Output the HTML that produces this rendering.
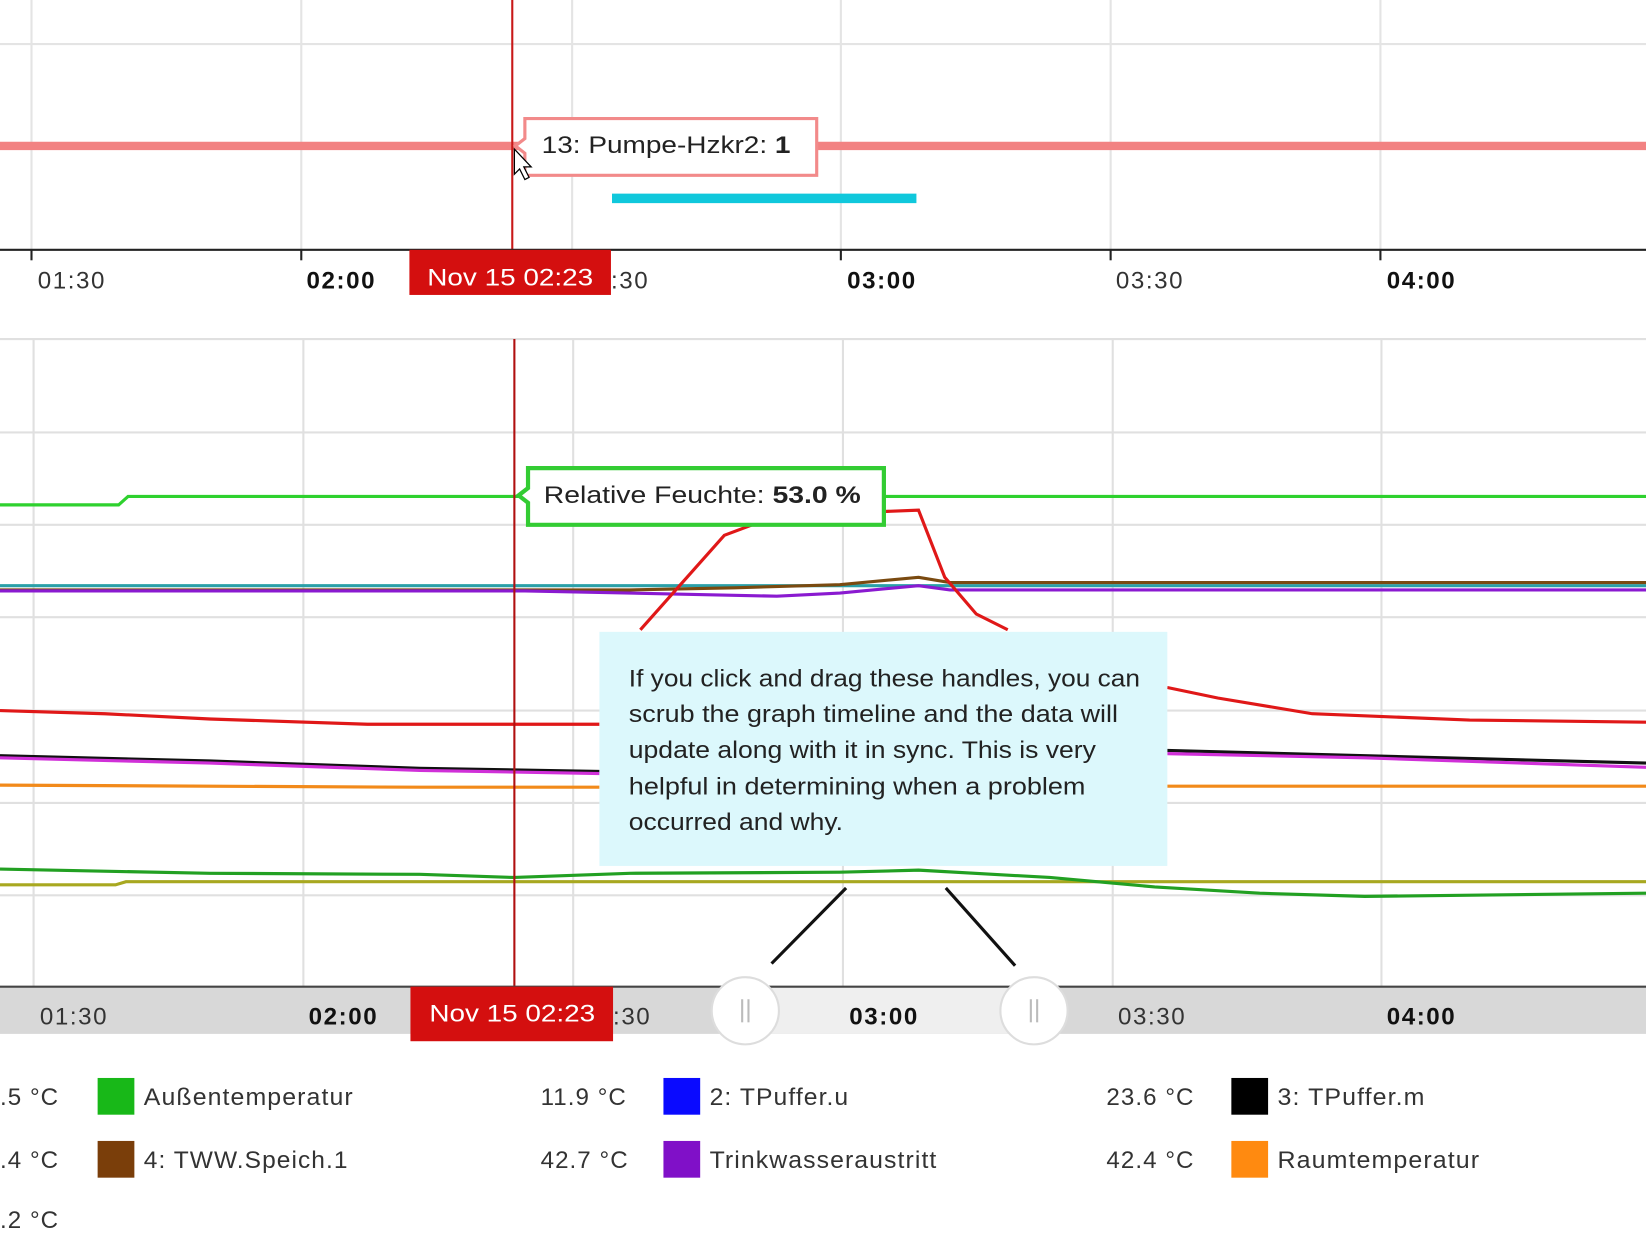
<!DOCTYPE html>
<html><head><meta charset="utf-8"><style>
html,body{margin:0;padding:0;background:#fff;overflow:hidden}
svg{display:block}
text{font-family:"Liberation Sans",sans-serif}
</style></head><body>
<svg width="1646" height="1248" viewBox="0 0 1568 1189" preserveAspectRatio="none" xmlns="http://www.w3.org/2000/svg">
<rect width="1568" height="1189" fill="#fff"/>
<g stroke="#e4e4e4" stroke-width="2">
<line x1="0" y1="42" x2="1568" y2="42"/>
<line x1="30" y1="0" x2="30" y2="238"/><line x1="287" y1="0" x2="287" y2="238"/><line x1="545" y1="0" x2="545" y2="238"/><line x1="801" y1="0" x2="801" y2="238"/><line x1="1058" y1="0" x2="1058" y2="238"/><line x1="1315" y1="0" x2="1315" y2="238"/>
</g>
<line x1="0" y1="139" x2="1568" y2="139" stroke="#f28282" stroke-width="8"/>
<line x1="583" y1="189" x2="873" y2="189" stroke="#10c8dc" stroke-width="9"/>
<line x1="488" y1="0" x2="488" y2="238" stroke="#c81818" stroke-width="2"/>
<path d="M500 113H778V167H500V146L491 139L500 132Z" fill="#fff" stroke="#f28a8a" stroke-width="3"/>
<text x="516" y="146" font-size="23" fill="#222" textLength="237" lengthAdjust="spacingAndGlyphs">13: Pumpe-Hzkr2:  <tspan font-weight="bold">1</tspan></text>
<path d="M490 142L490 166L495 161L500 171L504 169L499 159L506 159Z" fill="#fff" stroke="#000" stroke-width="1.2"/>
<line x1="0" y1="238" x2="1568" y2="238" stroke="#222" stroke-width="2"/>
<g stroke="#222" stroke-width="2"><line x1="30" y1="238" x2="30" y2="248"/><line x1="287" y1="238" x2="287" y2="248"/><line x1="801" y1="238" x2="801" y2="248"/><line x1="1058" y1="238" x2="1058" y2="248"/><line x1="1315" y1="238" x2="1315" y2="248"/></g>
<g font-size="23" fill="#333" letter-spacing="1.5"><text x="36" y="275">01:30</text><text x="292" y="275" font-weight="bold" fill="#111">02:00</text><text x="582" y="275">:30</text><text x="807" y="275" font-weight="bold" fill="#111">03:00</text><text x="1063" y="275">03:30</text><text x="1321" y="275" font-weight="bold" fill="#111">04:00</text></g>
<rect x="390" y="238" width="192" height="43" fill="#d40f0f"/>
<text x="407" y="272" font-size="23" fill="#fff" textLength="158" lengthAdjust="spacingAndGlyphs">Nov 15 02:23</text>
<g stroke="#e0e0e0" stroke-width="2">
<line x1="0" y1="323" x2="1568" y2="323"/><line x1="0" y1="412" x2="1568" y2="412"/><line x1="0" y1="500" x2="1568" y2="500"/><line x1="0" y1="588" x2="1568" y2="588"/><line x1="0" y1="677" x2="1568" y2="677"/><line x1="0" y1="765" x2="1568" y2="765"/><line x1="0" y1="853" x2="1568" y2="853"/>
<line x1="32" y1="323" x2="32" y2="940"/><line x1="289" y1="323" x2="289" y2="940"/><line x1="546" y1="323" x2="546" y2="940"/><line x1="803" y1="323" x2="803" y2="940"/><line x1="1060" y1="323" x2="1060" y2="940"/><line x1="1316" y1="323" x2="1316" y2="940"/>
</g>
<g fill="none" stroke-width="3">
<path d="M0 481H113L122 473H1568" stroke="#2ed12e"/>
<path d="M0 558H1568" stroke="#2aa0a8"/>
<path d="M0 562H600L700 560L800 557L875 550L905 555H1568" stroke="#7a4a10"/>
<path d="M0 563H500L600 565L740 568L800 565L875 558L905 562H1568" stroke="#8a1ad0"/>
<path d="M610 600L650 555L690 510L730 495L800 489L875 486L900 550L930 585L960 600" stroke="#e01818"/>
<path d="M0 677L100 680L200 685L350 690H571M1112 655L1160 665L1250 680L1400 686L1568 688" stroke="#e01818"/>
<path d="M0 720L200 725L400 732L571 735M1112 715L1300 720L1568 727" stroke="#111"/>
<path d="M0 722L200 727L400 734L571 737M1112 718L1300 722L1568 731" stroke="#d030d8"/>
<path d="M0 748L400 750H571M1112 749H1568" stroke="#f28a1a"/>
<path d="M0 843H110L120 840H1568" stroke="#a8a820"/>
<path d="M0 828L200 832L400 833L490 836L600 832L800 831L875 829L1000 836L1100 845L1200 851L1300 854L1568 851" stroke="#22a022"/>
</g>
<line x1="490" y1="323" x2="490" y2="940" stroke="#b01010" stroke-width="2"/>
<path d="M503 446H842V500H503V479L494 472L503 465Z" fill="#fff" stroke="#33cc33" stroke-width="4"/>
<text x="518" y="479" font-size="23" fill="#222" textLength="302" lengthAdjust="spacingAndGlyphs">Relative Feuchte:  <tspan font-weight="bold">53.0 %</tspan></text>
<rect x="571" y="602" width="541" height="223" fill="#dcf8fc"/>
<g font-size="23" fill="#222"><text x="599" y="654" textLength="487" lengthAdjust="spacingAndGlyphs">If you click and drag these handles, you can</text><text x="599" y="688" textLength="466" lengthAdjust="spacingAndGlyphs">scrub the graph timeline and the data will</text><text x="599" y="722" textLength="445" lengthAdjust="spacingAndGlyphs">update along with it in sync. This is very</text><text x="599" y="757" textLength="435" lengthAdjust="spacingAndGlyphs">helpful in determining when a problem</text><text x="599" y="791" textLength="204" lengthAdjust="spacingAndGlyphs">occurred and why.</text></g>
<g stroke="#111" stroke-width="3"><line x1="806" y1="846" x2="735" y2="918"/><line x1="901" y1="846" x2="967" y2="920"/></g>
<rect x="0" y="940" width="1568" height="45" fill="#d8d8d8"/>
<rect x="710" y="940" width="275" height="45" fill="#efefef"/>
<line x1="0" y1="940" x2="1568" y2="940" stroke="#444" stroke-width="2"/>
<g font-size="23" fill="#333" letter-spacing="1.5"><text x="38" y="976">01:30</text><text x="294" y="976" font-weight="bold" fill="#111">02:00</text><text x="584" y="976">:30</text><text x="809" y="976" font-weight="bold" fill="#111">03:00</text><text x="1065" y="976">03:30</text><text x="1321" y="976" font-weight="bold" fill="#111">04:00</text></g>
<rect x="391" y="940" width="193" height="52" fill="#d40f0f"/>
<text x="409" y="973" font-size="23" fill="#fff" textLength="158" lengthAdjust="spacingAndGlyphs">Nov 15 02:23</text>
<g><circle cx="710" cy="963" r="32" fill="#fff" stroke="#ddd" stroke-width="2"/><line x1="707" y1="952" x2="707" y2="974" stroke="#bbb" stroke-width="2"/><line x1="713" y1="952" x2="713" y2="974" stroke="#bbb" stroke-width="2"/>
<circle cx="985" cy="963" r="32" fill="#fff" stroke="#ddd" stroke-width="2"/><line x1="982" y1="952" x2="982" y2="974" stroke="#bbb" stroke-width="2"/><line x1="988" y1="952" x2="988" y2="974" stroke="#bbb" stroke-width="2"/></g>
<g font-size="23" fill="#333" letter-spacing="1">
<text x="0" y="1053">.5 °C</text><rect x="93" y="1027" width="35" height="35" fill="#18b818"/><text x="137" y="1053" textLength="200" lengthAdjust="spacingAndGlyphs">Außentemperatur</text>
<text x="515" y="1053">11.9 °C</text><rect x="632" y="1027" width="35" height="35" fill="#0a0aff"/><text x="676" y="1053" textLength="133" lengthAdjust="spacingAndGlyphs">2: TPuffer.u</text>
<text x="1054" y="1053">23.6 °C</text><rect x="1173" y="1027" width="35" height="35" fill="#000"/><text x="1217" y="1053" textLength="141" lengthAdjust="spacingAndGlyphs">3: TPuffer.m</text>
<text x="0" y="1113">.4 °C</text><rect x="93" y="1087" width="35" height="35" fill="#7a3e0a"/><text x="137" y="1113" textLength="195" lengthAdjust="spacingAndGlyphs">4: TWW.Speich.1</text>
<text x="515" y="1113">42.7 °C</text><rect x="632" y="1087" width="35" height="35" fill="#8010c8"/><text x="676" y="1113" textLength="217" lengthAdjust="spacingAndGlyphs">Trinkwasseraustritt</text>
<text x="1054" y="1113">42.4 °C</text><rect x="1173" y="1087" width="35" height="35" fill="#ff8a10"/><text x="1217" y="1113" textLength="193" lengthAdjust="spacingAndGlyphs">Raumtemperatur</text>
<text x="0" y="1170">.2 °C</text>
</g>
</svg>
</body></html>
